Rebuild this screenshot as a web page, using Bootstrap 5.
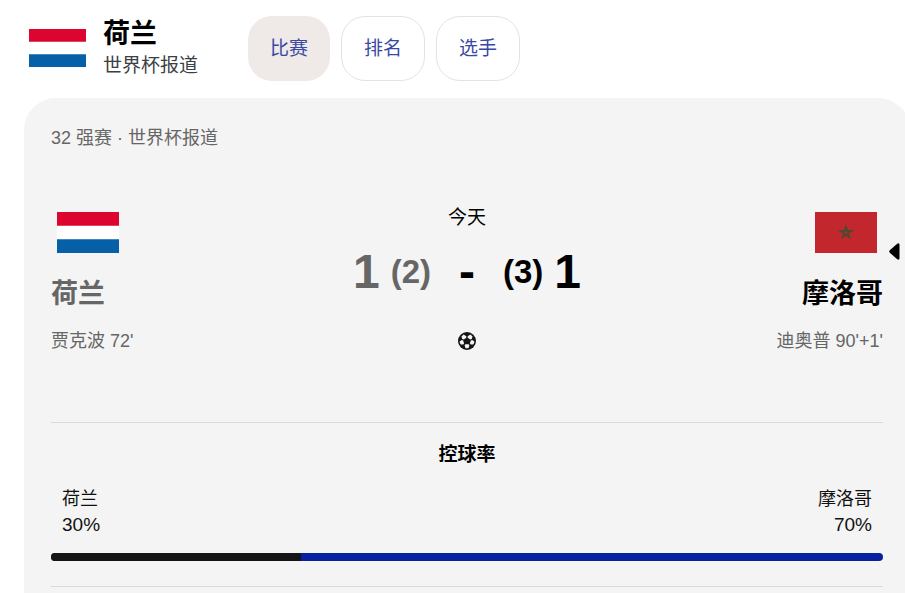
<!DOCTYPE html>
<html lang="zh-CN">
<head>
<meta charset="utf-8">
<meta name="viewport" content="width=device-width, initial-scale=1">
<title>荷兰 - 世界杯报道</title>
<link href="https://cdn.jsdelivr.net/npm/bootstrap@5.3.0/dist/css/bootstrap.min.css" rel="stylesheet">
<style>
body { font-family: "Liberation Sans", "Noto Sans CJK SC", sans-serif; font-size: 18px; line-height: 24px; color: #111; overflow-x: hidden; background: #fff; }
.site-head { padding: 16px 29px 17px; }
.flag-sm { width: 57px; height: 38px; }
.flag-lg { width: 62px; height: 41px; margin: 0 6px; }
.brand-block { gap: 17px; margin-right: 50px; padding-bottom: 2px; }
.brand-name, .team-name { font-size: 27px; line-height: 36px; font-weight: 700; color: #000; margin: 0; }
.brand-sub { font-size: 19px; line-height: 27px; color: #3c4043; }
.tab-set { gap: 11px; }
.tab-btn { height: 65px; padding: 0 22px; border: 1px solid #e3e3e6; border-radius: 24px; font-size: 19px; line-height: 24px; color: #3949a3; }
.tab-btn.active, .tab-btn:hover { background: #efe9e8; color: #3949a3; }
.tab-btn.active { border: 0; }
.match-panel { background: #f4f4f4; border-radius: 32px 32px 0 0; margin-left: 24px; margin-right: -5px; padding: 28px 27px 0; }
.soft { color: #666; }
.team-name.soft { color: #666; }
.match-main { margin-top: 53px; }
.team-box { gap: 23px; padding-top: 9px; }
.when { font-size: 19px; line-height: 28px; color: #000; padding-top: 1px; }
.score-line { gap: 28px; margin-top: 13px; font-size: 48px; line-height: 54px; font-weight: 700; color: #000; }
.score-line .soft { color: #666; }
.score-side { gap: 11px; }
.pens { font-size: 33px; }
.scorers { margin-top: 17px; padding-bottom: 69px; }
.ball { width: 18px; height: 18px; }
.ruled { border-top: 1px solid #d9d9d9; }
.stat-title { font-size: 19px; line-height: 28px; font-weight: 700; color: #000; margin: 0; padding-top: 18px; }
.stat-names { padding: 18px 11px 16px; line-height: 25px; }
.stat-names .pct { font-size: 19px; line-height: 25px; }
.share-bar { height: 8px; border-radius: 4px; background: #0620a0; margin-bottom: 25px; }
.share-bar .progress-bar { background: #151515; }
.next-arrow { right: 10px; top: 145px; width: 11px; height: 17px; }
</style>
<script src="https://cdn.jsdelivr.net/npm/bootstrap@5.3.0/dist/js/bootstrap.bundle.min.js"></script>
</head>
<body class="d-flex flex-column min-vh-100">
<svg class="d-none" aria-hidden="true">
  <symbol id="flag-nl" viewBox="0 0 60 39" preserveAspectRatio="none"><path fill="#fff" d="M0 0h60v39H0z"/><path fill="#dc0530" d="M0 0h60v13H0z"/><path fill="#0560a8" d="M0 26h60v13H0z"/></symbol>
</svg>
<header class="site-head d-flex align-items-center">
  <div class="brand-block d-flex align-items-center">
    <svg class="flag-sm" role="img" aria-label="荷兰"><use href="#flag-nl"/></svg>
    <div>
      <h1 class="brand-name">荷兰</h1>
      <div class="brand-sub">世界杯报道</div>
    </div>
  </div>
  <nav class="tab-set d-flex" aria-label="栏目">
    <button type="button" class="btn tab-btn active">比赛</button>
    <button type="button" class="btn tab-btn">排名</button>
    <button type="button" class="btn tab-btn">选手</button>
  </nav>
</header>
<main class="match-panel position-relative flex-grow-1">
  <div class="soft">32 强赛 · 世界杯报道</div>
  <section class="match-main d-flex justify-content-between">
    <div class="team-box d-flex flex-column align-items-start col">
      <svg class="flag-lg" role="img" aria-label="荷兰国旗"><use href="#flag-nl"/></svg>
      <h2 class="team-name soft">荷兰</h2>
    </div>
    <div class="d-flex flex-column align-items-center col-auto">
      <div class="when">今天</div>
      <div class="score-line d-flex align-items-center">
        <div class="score-side soft d-flex"><span>1</span><span class="pens">(2)</span></div>
        <span>-</span>
        <div class="score-side d-flex"><span class="pens">(3)</span><span>1</span></div>
      </div>
    </div>
    <div class="team-box d-flex flex-column align-items-end col">
      <svg class="flag-lg" viewBox="0 0 62 41" role="img" aria-label="摩洛哥国旗"><path fill="#c1272d" d="M0 0h62v41H0z"/><path fill="none" stroke="#4c4a2c" stroke-width="1.5" d="M31 14.5 34.6 25.5 25.2 18.7H36.8L27.4 25.5Z"/></svg>
      <h2 class="team-name">摩洛哥</h2>
    </div>
  </section>
  <div class="scorers soft d-flex align-items-center">
    <div class="col">贾克波 72'</div>
    <svg class="ball" viewBox="0 0 18 18" role="img" aria-label="进球"><circle cx="9" cy="9" r="9" fill="#151515"/><g fill="#f4f4f4"><path d="M5.6 2.5 8.3 4.2V5.7L5.8 7.5 4.2 7 3.5 4.6Z"/><path d="M12.4 2.5 9.7 4.2V5.7L12.2 7.5 13.8 7 14.5 4.6Z"/><path d="M1.6 9.4 3.7 8 5.2 8.5 6.1 11.4 5.2 12.6H2.8Q1.8 11.2 1.6 9.4Z"/><path d="M16.4 9.4 14.3 8 12.8 8.5 11.9 11.4 12.8 12.6H15.2Q16.2 11.2 16.4 9.4Z"/><path d="M7.4 12.2H10.6L11.4 13.3 10.6 16Q9 16.7 7.4 16L6.6 13.3Z"/></g></svg>
    <div class="col text-end">迪奥普 90'+1'</div>
  </div>
  <section class="ruled">
    <h3 class="stat-title text-center">控球率</h3>
    <div class="stat-names d-flex justify-content-between">
      <div><div>荷兰</div><div class="pct">30%</div></div>
      <div class="text-end"><div>摩洛哥</div><div class="pct">70%</div></div>
    </div>
    <div class="progress share-bar" role="progressbar" aria-label="控球率" aria-valuenow="30" aria-valuemin="0" aria-valuemax="100">
      <div class="progress-bar" style="width: 30%"></div>
    </div>
  </section>
  <div class="ruled"></div>
  <button type="button" class="next-arrow btn p-0 border-0 position-absolute d-flex" aria-label="返回"><svg width="11" height="17" viewBox="0 0 11 17"><path d="M0.8 7.3 8.2 0.7Q10.5-.5 10.5 2V15Q10.5 17.5 8.2 16.3L.8 9.7Q-.3 8.5.8 7.3Z"/></svg></button>
</main>
</body>
</html>
